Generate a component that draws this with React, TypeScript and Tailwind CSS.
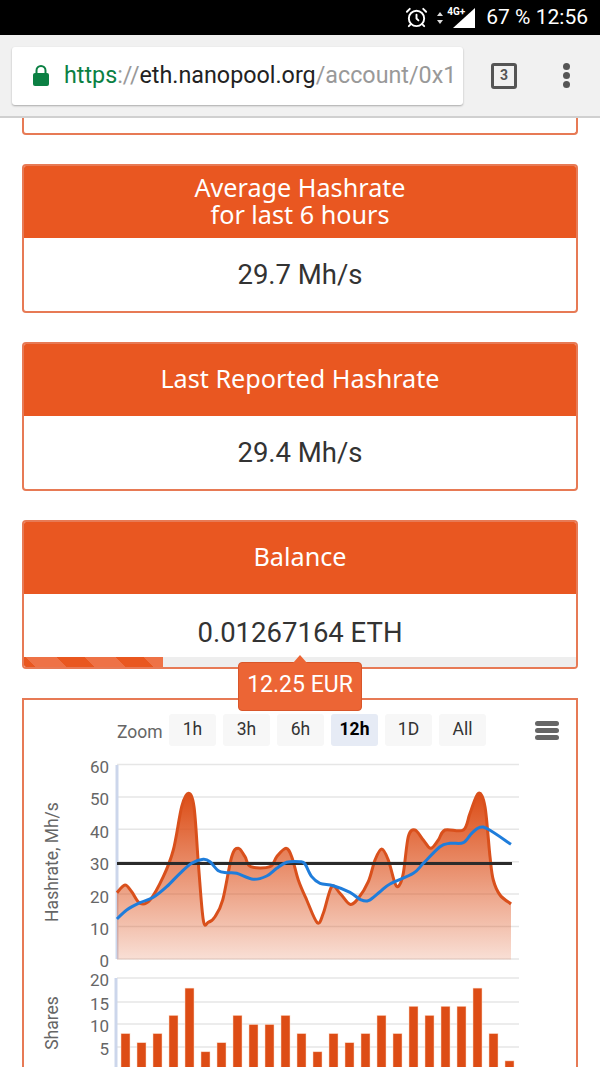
import { AlarmClock } from 'lucide-react';

type Pt = [number, number];

const hashrate: Pt[] = [
  [117, 892.7], [125, 885], [131.7, 891.7], [140, 903.3], [150, 900], [163.3, 876.7], [173.3, 850],
  [181.7, 806.7], [188.3, 793.3], [194, 806.7], [198.3, 863], [203.3, 920], [208.3, 922.3], [215, 916.7],
  [222.7, 900], [231.7, 856.7], [238.3, 848.3], [245, 856.7], [250.7, 866.7], [270, 866.7], [276.7, 856.7],
  [286, 848.3], [291.7, 856.7], [298.3, 880], [306.7, 900], [317.3, 922.7], [323.3, 913.3], [331.7, 886.7],
  [340, 893.3], [350, 904.3], [358.3, 898.3], [368.3, 881.7], [375, 860], [381.7, 849], [388.3, 860],
  [395, 883.3], [399, 885.7], [403.3, 873.3], [408.3, 836.7], [415, 830], [423.3, 840], [430.7, 848.3],
  [438.3, 840], [445, 830], [463.3, 830], [470, 813.3], [478.3, 793.3], [485, 806.7], [490, 856.7],
  [493.3, 880], [500, 895], [511, 904],
];

const average: Pt[] = [
  [117, 919], [126.7, 910], [140, 902.7], [153.3, 897.3], [166.7, 886.7], [180, 873.3], [191.7, 863.3],
  [203.3, 859.3], [210, 861.7], [218.3, 870.7], [226.7, 872.7], [236.7, 873.3], [253.3, 879.3], [266.7, 876],
  [276.7, 868.3], [286.7, 862.3], [300, 861.7], [305, 864], [311.7, 876.7], [320, 883.3], [333.3, 885.7],
  [350, 892.3], [360, 899.3], [368.3, 900.7], [380, 891.7], [390, 884], [413.3, 873.3], [423.3, 863.3],
  [440, 846.7], [450, 843.3], [463.3, 842.7], [471.7, 833.3], [480, 827.3], [488.3, 829.3], [511, 844.3],
];

const shares = [8, 6, 8, 12, 18, 4, 6, 12, 10, 10, 12, 8, 4, 8, 6, 8, 12, 8, 14, 12, 14, 14, 18, 8, 2];
const zoomRanges = ['1h', '3h', '6h', '12h', '1D', 'All'];

// catmull-rom through the traced points
function smooth(pts: Pt[]) {
  let d = `M${pts[0][0]} ${pts[0][1]}`;
  for (let i = 0; i < pts.length - 1; i++) {
    const p0 = pts[i - 1] ?? pts[i];
    const p1 = pts[i];
    const p2 = pts[i + 1];
    const p3 = pts[i + 2] ?? p2;
    const c1x = p1[0] + (p2[0] - p0[0]) / 6;
    const c1y = p1[1] + (p2[1] - p0[1]) / 6;
    const c2x = p2[0] - (p3[0] - p1[0]) / 6;
    const c2y = p2[1] - (p3[1] - p1[1]) / 6;
    d += `C${c1x.toFixed(1)} ${c1y.toFixed(1)} ${c2x.toFixed(1)} ${c2y.toFixed(1)} ${p2[0]} ${p2[1]}`;
  }
  return d;
}

function StatusBar() {
  return (
    <div className="h-[35px] bg-black flex items-center justify-end pr-[12px] text-white font-['Roboto',sans-serif]">
      <AlarmClock className="size-[23px] mr-[8px]" strokeWidth={2} />
      <svg width="8" height="14" viewBox="0 0 8 14" className="mr-[3px]" fill="#ddd">
        <path d="M4 1 7 5H1zM4 13 1 9h6z" />
      </svg>
      <div className="relative w-[30px] h-[24px] mr-[9px]">
        <svg width="30" height="24" viewBox="0 0 30 24" fill="#fff" className="absolute inset-0">
          <path d="M28 2V22H6z" />
        </svg>
        <span className="absolute left-0 top-[0px] text-[10px] leading-[12px] font-bold">4G+</span>
      </div>
      <span className="text-[21px] leading-none">67 % 12:56</span>
    </div>
  );
}

function Toolbar() {
  return (
    <div className="h-[83px] bg-[#f1f1f1] border-b-2 border-[#d0d0d0] flex items-center pl-[12px] font-['Roboto',sans-serif]">
      <div className="w-[451px] h-[58px] bg-white rounded-[3px] shadow-[0_1px_2px_rgba(0,0,0,0.3)] flex items-center pl-[21px]">
        <svg width="16" height="21" viewBox="0 0 16 21" className="shrink-0">
          <path d="M3.5 9V5.5a4.5 4.5 0 0 1 9 0V9" fill="none" stroke="#0b8043" strokeWidth="2" />
          <rect x="0" y="8" width="16" height="13" rx="2" fill="#0b8043" />
        </svg>
        <div className="ml-[15px] whitespace-nowrap text-[23.3px] leading-none text-[#999]">
          <span className="text-[#0b8043]">https</span>
          ://
          <span className="text-[#222]">eth.nanopool.org</span>
          /account/0x1
        </div>
      </div>
      <div className="ml-[28px] size-[26px] border-[3px] border-[#555] rounded-[3px] flex items-center justify-center text-[14px] font-bold text-[#555]">
        3
      </div>
      <div className="ml-[46px] flex flex-col gap-[2px]">
        <div className="size-[7px] rounded-full bg-[#555]" />
        <div className="size-[7px] rounded-full bg-[#555]" />
        <div className="size-[7px] rounded-full bg-[#555]" />
      </div>
    </div>
  );
}

function StatCard({ title, value, progress }: { title: string; value: string; progress?: boolean }) {
  return (
    <div className="h-[149px] border-2 border-[#e77a55] rounded-[4px] overflow-hidden flex flex-col">
      <div className="h-[72px] pb-[3px] bg-[#e95721] flex items-center justify-center text-center text-white text-[25.2px] leading-[27px] font-['Noto_Sans',sans-serif] whitespace-pre-line">
        {title}
      </div>
      <div className="flex-1 flex flex-col">
        <div
          className={
            progress
              ? "flex-1 pt-[14px] flex items-center justify-center text-[27.5px] text-[#333] font-['Roboto',sans-serif]"
              : "flex-1 flex items-center justify-center text-[27.5px] text-[#333] font-['Roboto',sans-serif]"
          }
        >
          {value}
        </div>
        {progress && (
          <div className="h-[10px] bg-[#eeeeee]">
            <div className="h-full w-[139px] bg-[repeating-linear-gradient(45deg,#e9571f_0,#e9571f_8px,#ee7246_8px,#ee7246_30px,#e9571f_30px,#e9571f_41.7px)]" />
          </div>
        )}
      </div>
    </div>
  );
}

function Charts() {
  const labels = [60, 50, 40, 30, 20, 10, 0];
  const barLabels = [20, 15, 10, 5];
  const barGrid = [978, 1002, 1024, 1047];
  const line = smooth(hashrate);

  return (
    <svg width="553" height="320" viewBox="24 750 553 320" className="block font-['Roboto',sans-serif]">
      <defs>
        <linearGradient id="area" x1="0" y1="793" x2="0" y2="959" gradientUnits="userSpaceOnUse">
          <stop offset="0" stopColor="#dc4c15" />
          <stop offset="1" stopColor="#dc4c15" stopOpacity="0.18" />
        </linearGradient>
      </defs>

      {labels.map((v, i) => (
        <g key={v}>
          <line x1="117" x2="519" y1={764.5 + i * 32.4} y2={764.5 + i * 32.4} stroke="#e6e6e6" strokeWidth="1.5" />
          <text x="109" y={773 + i * 32.4} textAnchor="end" fontSize="17" fill="#666">{v}</text>
        </g>
      ))}
      <line x1="117" x2="117" y1="765" y2="959" stroke="#ccd6eb" strokeWidth="3" />
      <text transform="translate(58 862) rotate(-90)" textAnchor="middle" fontSize="17.5" fill="#666">Hashrate, Mh/s</text>

      <path d={`${line}L511 959.5L117 959.5Z`} fill="url(#area)" />
      <path d={line} fill="none" stroke="#d9501c" strokeWidth="3" />
      <line x1="117" x2="512" y1="863.5" y2="863.5" stroke="#2b2b2b" strokeWidth="3" />
      <path d={smooth(average)} fill="none" stroke="#1f7ddb" strokeWidth="3" />

      {barLabels.map((v, i) => (
        <g key={v}>
          <line x1="117" x2="519" y1={barGrid[i]} y2={barGrid[i]} stroke="#e6e6e6" strokeWidth="1.5" />
          <text x="109" y={barGrid[i] + 8} textAnchor="end" fontSize="17" fill="#666">{v}</text>
        </g>
      ))}
      <line x1="116" x2="116" y1="978" y2="1070" stroke="#ccd6eb" strokeWidth="3" />
      <text transform="translate(58 1023) rotate(-90)" textAnchor="middle" fontSize="17.5" fill="#666">Shares</text>

      {shares.map((v, i) => (
        <rect key={i} x={121 + i * 16} y={1070 - v * 4.55} width="9" height={v * 4.55} fill="#dd4c15" stroke="#fbd9c6" strokeWidth="0.5" />
      ))}
    </svg>
  );
}

export default function App() {
  return (
    <div className="w-[600px] h-[1067px] overflow-hidden bg-white relative">
      <StatusBar />
      <Toolbar />

      <main className="px-[22px] flex flex-col gap-[29px]">
        <div className="h-[17px] border-2 border-t-0 border-[#e77a55] rounded-b-[4px]" />
        <StatCard title={'Average Hashrate\nfor last 6 hours'} value="29.7 Mh/s" />
        <StatCard title="Last Reported Hashrate" value="29.4 Mh/s" />
        <StatCard title="Balance" value="0.01267164 ETH" progress />

        <section className="border-2 border-[#e77a55] h-[400px]">
          <div className="h-[36px] mt-[14px] flex items-start font-['Roboto',sans-serif]">
            <span className="ml-[93px] w-[52px] mt-[8px] text-[17.5px] leading-[20px] text-[#666]">Zoom</span>
            <div className="flex gap-[7px]">
              {zoomRanges.map((r) => (
                <div
                  key={r}
                  className={
                    r === '12h'
                      ? 'w-[47px] h-[32px] pb-[2px] rounded-[3px] bg-[#e6ebf5] flex items-center justify-center text-[17.5px] font-bold text-black'
                      : 'w-[47px] h-[32px] pb-[2px] rounded-[3px] bg-[#f7f7f7] flex items-center justify-center text-[17.5px] text-[#333]'
                  }
                >
                  {r}
                </div>
              ))}
            </div>
            <div className="ml-[49px] mt-[7px] w-[24px] flex flex-col gap-[2px]">
              <div className="h-[5px] rounded-full bg-[#666]" />
              <div className="h-[5px] rounded-full bg-[#666]" />
              <div className="h-[5px] rounded-full bg-[#666]" />
            </div>
          </div>
          <Charts />
        </section>
      </main>

      {/* tooltip sits over the balance card and the chart box */}
      <div className="absolute left-[238px] top-[662px] w-[124px] h-[49px] pb-[3px] bg-[#ec6535] border border-[#d9562a] rounded-[4px] flex items-center justify-center text-white text-[23px] font-['Roboto',sans-serif]">
        <div className="absolute left-1/2 -translate-x-1/2 -top-[8px] w-0 h-0 border-x-[7px] border-x-transparent border-b-[8px] border-b-[#ec6535]" />
        12.25 EUR
      </div>
    </div>
  );
}
